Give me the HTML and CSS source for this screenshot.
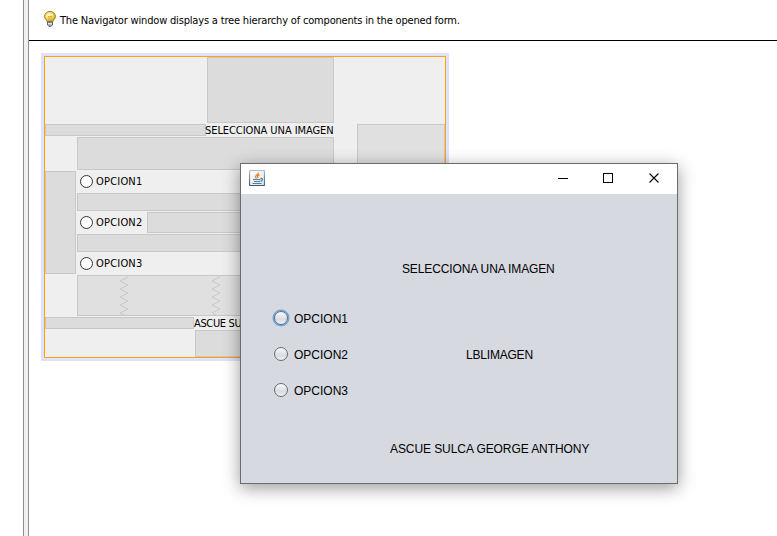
FILE: index.html
```html
<!DOCTYPE html>
<html lang="es">
<head>
<meta charset="utf-8">
<title>Form designer</title>
<link rel="stylesheet" href="styles.css">
</head>
<body>
<div class="app">
  <div class="side"></div>
  <div class="splitter"></div>
  <main class="editor">
    <header class="hint">
      <svg class="bulb" width="12" height="16" viewBox="0 0 12 16">
        <defs><radialGradient id="glow" cx=".4" cy=".35" r=".65"><stop offset="0" stop-color="#fffbd8"/><stop offset=".55" stop-color="#f8de62"/><stop offset="1" stop-color="#d0a526"/></radialGradient></defs>
        <path d="M6 .5C2.8.5.6 2.7.6 5.5c0 2.2 2 3.3 2.6 5.3h5.6c.6-2 2.6-3.1 2.6-5.3C11.4 2.7 9.2.5 6 .5z" fill="url(#glow)" stroke="#94772b"/>
        <path d="M4 5l1 1 1-1 1 1 1-1M5 6v4M7 6v4" fill="none" stroke="#c69a28" stroke-width=".7"/>
        <path d="M3.5 11h5v3L7 15.3H5L3.5 14z" fill="#aab0b8" stroke="#5c6268"/>
        <path d="M4 12.7h4" stroke="#f0f0f0"/>
      </svg>
      <span class="hint-text">The Navigator window displays a tree hierarchy of components in the opened form.</span>
    </header>
    <section class="form">
      <div class="gap top"></div>
      <div class="gap title-left"></div>
      <span class="label title">SELECCIONA UNA IMAGEN</span>
      <div class="gap right"></div>
      <div class="gap under-title"></div>
      <div class="gap left"></div>
      <div class="option o1"><i class="dot"></i><span>OPCION1</span></div>
      <div class="gap between-12"></div>
      <div class="option o2"><i class="dot"></i><span>OPCION2</span></div>
      <div class="gap beside-2"></div>
      <div class="gap between-23"></div>
      <div class="option o3"><i class="dot"></i><span>OPCION3</span></div>
      <div class="gap spring">
        <svg width="256" height="41"><path d="M50 1l-8 4 8 4-8 4 8 4-8 4 8 4-8 4 8 4-8 4 8 4M142 1l-8 4 8 4-8 4 8 4-8 4 8 4-8 4 8 4-8 4 8 4" fill="none" stroke="#c8c8c8"/></svg>
      </div>
      <div class="gap author-left"></div>
      <span class="label author">ASCUE SU</span>
      <div class="gap bottom"></div>
    </section>
  </main>
</div>

<div class="window">
  <div class="titlebar">
    <svg class="java" width="16" height="16" viewBox="0 0 16 16">
      <defs><linearGradient id="frame" x2="0" y2="1"><stop offset="0" stop-color="#a9bccb"/><stop offset="1" stop-color="#3c5a70"/></linearGradient>
      <linearGradient id="face" x2="1" y2="1"><stop offset="0" stop-color="#fff"/><stop offset="1" stop-color="#dfe2e6"/></linearGradient></defs>
      <rect x=".5" y=".5" width="15" height="15" rx="1" fill="url(#face)" stroke="url(#frame)" stroke-width="1.2"/>
      <path d="M9.500 2.500C10 4.500 6 5 6.500 7L7.500 8.500M10.500 5C8.500 5.500 8 6.500 9 8" fill="none" stroke="#e8822a" stroke-width="1.300"/>
      <path d="M4 9.500h7.500M5 11.500h6M11.500 8.500c2.500-.5 2.500 2 0 3M3.500 13.500h9" fill="none" stroke="#527c9c" stroke-width="1.200"/>
    </svg>
    <svg class="controls" width="102" height="11" viewBox="0 0 102 11" fill="none" stroke="#000">
      <path d="M0 5.500h10"/>
      <rect x="45.500" y=".5" width="9" height="9"/>
      <path d="M91.500.5l9 9M100.500.5l-9 9" stroke-width="1.100"/>
    </svg>
  </div>
  <div class="content">
    <span class="heading">SELECCIONA UNA IMAGEN</span>
    <div class="choices">
      <div class="choice"><i class="radio focused"></i><span>OPCION1</span></div>
      <div class="choice"><i class="radio"></i><span>OPCION2</span></div>
      <div class="choice"><i class="radio"></i><span>OPCION3</span></div>
    </div>
    <span class="image-label">LBLIMAGEN</span>
    <span class="signature">ASCUE SULCA GEORGE ANTHONY</span>
  </div>
</div>
</body>
</html>
```
FILE: styles.css
```css
* { box-sizing: border-box; }
html, body { margin: 0; height: 100%; overflow: hidden; background: #fff; }
body { font: 11px/13px "DejaVu Sans Condensed", "DejaVu Sans", sans-serif; color: #000; }
span { white-space: nowrap; }
.app { display: grid; grid-template-columns: 23px 6px 1fr; height: 536px; }
.splitter { background: #f0f0f0; border: solid #8f8f98; border-width: 0 1px; }
.hint { display: flex; align-items: center; gap: 4px; height: 41px; padding: 0 0 2px 15px; border-bottom: 1px solid #000; }
.hint-text { padding-top: 2px; letter-spacing: -.18px; }
.form {
  display: grid;
  grid-template-columns: 32px 70px 47px 12px 128px 23px 88px;
  grid-template-rows: 67px 13px 34px 22px 19px 22px 19px 22px 42px 13px 27px;
  width: 402px; height: 302px; margin: 15px 0 0 15px;
  background: #efefef; border: 1px solid #ffa500; box-shadow: 0 0 0 3px #e0e0ff;
}
.gap { margin: 0 1px 1px 0; background: #dcdcdc; border: 1px solid #c8c8c8; }
.top { grid-area: 1 / 5; margin: 0 0 1px 1px; }
.title-left { grid-area: 2 / 1 / 3 / 5; margin-right: 0; }
.title { grid-area: 2 / 5; margin-left: -1px; }
.right { grid-area: 2 / 7 / 10 / 8; margin-right: 0; background: #e0e0e0; }
.under-title { grid-area: 3 / 2 / 4 / 6; margin-right: 0; }
.left { grid-area: 4 / 1 / 9 / 2; }
.o1 { grid-area: 4 / 2; }
.between-12 { grid-area: 5 / 2 / 6 / 6; }
.o2 { grid-area: 6 / 2; }
.beside-2 { grid-area: 6 / 3 / 7 / 6; }
.between-23 { grid-area: 7 / 2 / 8 / 6; }
.o3 { grid-area: 8 / 2; }
.spring { grid-area: 9 / 2 / 10 / 6; background: #e0e0e0; overflow: hidden; }
.spring svg { display: block; }
.author-left { grid-area: 10 / 1 / 11 / 4; margin-right: 0; }
.author { grid-area: 10 / 4 / 11 / 5; }
.bottom { grid-area: 11 / 4 / 12 / 6; margin: 0 0 0 1px; }
.label { letter-spacing: -.07px; }
.author { letter-spacing: -.35px; }
.option { display: flex; align-items: center; gap: 3px; padding: 0 0 2px 3px; letter-spacing: .2px; }
.dot { width: 13px; height: 13px; border: 1px solid #333; border-radius: 50%; background: #fff; }

.window {
  position: absolute; left: 240px; top: 163px; width: 438px; height: 321px;
  border: 1px solid #6b6c70; background: #d6d9e0;
  box-shadow: 0 4px 16px rgba(0, 0, 0, .4);
  font: 12px/16px "Liberation Sans", Arial, sans-serif;
}
.titlebar { display: flex; justify-content: space-between; height: 30px; padding: 6px 17px 0 8px; background: #fff; }
.controls { margin-top: 3px; }
.content {
  display: grid; height: 289px; padding: 67px 0 0 32px;
  grid-template-columns: 116px 1fr; grid-template-rows: 41px 139px 1fr;
}
.heading { grid-area: 1 / 2; padding-left: 13px; letter-spacing: -.13px; }
.choices { grid-area: 2 / 1; display: grid; grid-template-rows: repeat(3, 36px); margin-top: -1px; }
.choice { display: flex; align-items: center; gap: 5px; height: 34px; }
.choice span { padding-top: 2px; }
.radio { width: 14px; height: 14px; margin: 0 1px; border: 1px solid #666c78; border-radius: 50%; background: linear-gradient(#fbfbfc, #d9dce1 60%, #f0f1f4); }
.focused { border-color: #526f94; box-shadow: 0 0 0 1.5px #73a4d1; }
.image-label { grid-area: 2 / 2; padding: 45px 0 0 77px; letter-spacing: -.2px; }
.signature { grid-area: 3 / 2; padding-left: 1px; letter-spacing: -.08px; }
```
